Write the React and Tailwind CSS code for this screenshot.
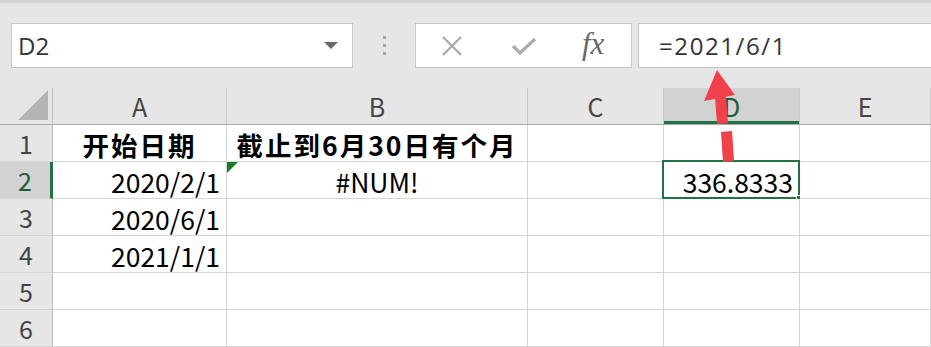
const cellFont = { fontFamily: '"Noto Sans CJK SC", "Liberation Sans", sans-serif' };

const cols = [
  { id: "A", w: "w-[174px]" },
  { id: "B", w: "w-[301px]" },
  { id: "C", w: "w-[136px]" },
  { id: "D", w: "w-[136px]" },
  { id: "E", w: "flex-1" },
];

const rows = [
  { n: 1, A: { t: "开始日期", bold: true, align: "center" }, B: { t: "截止到6月30日有个月", bold: true, align: "center" } },
  { n: 2, A: { t: "2020/2/1", align: "right" }, B: { t: "#NUM!", align: "center", flag: true }, D: { t: "336.8333", align: "right", selected: true } },
  { n: 3, A: { t: "2020/6/1", align: "right" } },
  { n: 4, A: { t: "2021/1/1", align: "right" } },
  { n: 5 },
  { n: 6 },
];

function Toolbar() {
  return (
    <div className="h-[88px] bg-[#e6e6e6] border-t-[3px] border-[#d4d4d4] flex items-start pt-[20px]">
      <div className="ml-[11px] w-[342px] h-[45px] bg-white border border-[#c6c6c6] flex items-center justify-between pl-[6px] pr-[14px]">
        <span className="text-[24px] text-[#333] leading-none" style={{ fontFamily: '"Open Sans", "Noto Sans", sans-serif' }}>D2</span>
        <svg width="14" height="8" viewBox="0 0 14 8"><path d="M0 0 L14 0 L7 7 Z" fill="#6b6b6b" /></svg>
      </div>
      <div className="w-[62px] h-[45px] flex flex-col items-center justify-center gap-[5px]">
        <span className="w-[3px] h-[3px] bg-[#a6a6a6]" />
        <span className="w-[3px] h-[3px] bg-[#a6a6a6]" />
        <span className="w-[3px] h-[3px] bg-[#a6a6a6]" />
      </div>
      <div className="w-[217px] h-[45px] bg-white border border-[#c6c6c6] flex items-center">
        <svg className="ml-[25px]" width="22" height="20" viewBox="0 0 22 20">
          <path d="M2 1 L20 19 M20 1 L2 19" stroke="#adadad" strokeWidth="2.4" />
        </svg>
        <svg className="ml-[48px]" width="26" height="20" viewBox="0 0 26 20">
          <path d="M2 10 L9 17 L24 3" stroke="#adadad" strokeWidth="3.4" fill="none" />
        </svg>
        <span className="ml-[45px] -mt-[4px] text-[31px] italic text-[#666] leading-none" style={{ fontFamily: '"Liberation Serif", serif' }}>fx</span>
      </div>
      <div className="ml-[6px] flex-1 h-[45px] bg-white border border-r-0 border-[#c6c6c6] flex items-center pl-[20px]">
        <span className="text-[24px] text-[#333] leading-none tracking-[1.6px]" style={{ fontFamily: '"Open Sans", "Noto Sans", sans-serif' }}>=2021/6/1</span>
      </div>
    </div>
  );
}

function HeaderRow() {
  return (
    <div className="flex h-[37px] bg-[#e6e6e6] border-b border-[#ababab]" style={cellFont}>
      <div className="w-[53px] shrink-0 border-r border-[#c0c0c0] relative">
        <svg className="absolute right-[4px] bottom-[4px]" width="30" height="30" viewBox="0 0 30 30">
          <path d="M30 0 L30 30 L0 30 Z" fill="#b4b4b4" />
        </svg>
      </div>
      {cols.map((c) => (
        <div
          key={c.id}
          className={`${c.w} shrink-0 border-r border-[#c8c8c8] flex items-center justify-center text-[25px] leading-none relative ${c.id === "D" ? "bg-[#d2d2d2] text-[#1e5c38]" : "text-[#444]"}`}
        >
          {c.id}
          {c.id === "D" && <span className="absolute left-0 right-0 bottom-0 h-[3px] bg-[#217346]" />}
        </div>
      ))}
    </div>
  );
}

function Row({ row }) {
  const sel = row.n === 2;
  return (
    <div className="flex h-[37px]" style={cellFont}>
      <div
        className={`w-[53px] shrink-0 border-b border-[#d4d4d4] flex items-center justify-center text-[25px] leading-none ${
          sel ? "bg-[#d2d2d2] text-[#1e5c38] border-r-[3px] border-r-[#217346]" : "bg-[#e6e6e6] text-[#444] border-r border-r-[#bcbcbc]"
        }`}
      >
        {row.n}
      </div>
      {cols.map((c) => {
        const cell = row[c.id];
        return (
          <div
            key={c.id}
            className={`${c.w} shrink-0 border-r border-b border-[#d4d4d4] bg-white flex items-center relative text-[26.5px] leading-none text-black ${
              cell?.align === "right" ? "justify-end pr-[6px]" : "justify-center"
            } ${cell?.bold ? "font-bold" : ""}`}
          >
            {cell?.flag && (
              <svg className="absolute left-0 top-0" width="11" height="11" viewBox="0 0 11 11">
                <path d="M0 0 L11 0 L0 11 Z" fill="#1d7a25" />
              </svg>
            )}
            {cell?.t && <span className={`pt-[4px] ${cell.bold ? "tracking-[2px]" : ""}`}>{cell.t}</span>}
            {cell?.selected && (
              <>
                <span className="absolute -left-[2px] -top-[2px] -right-[1px] -bottom-[1px] border-[2px] border-[#217346]" />
                <span className="absolute -right-[4px] -bottom-[4px] w-[7px] h-[7px] bg-[#217346] border border-white" />
              </>
            )}
          </div>
        );
      })}
    </div>
  );
}

export default function App() {
  return (
    <div className="w-[931px] h-[347px] overflow-hidden bg-white relative">
      <Toolbar />
      <HeaderRow />
      {rows.map((r) => (
        <Row key={r.n} row={r} />
      ))}
      {/* red arrow annotation */}
      <svg className="absolute left-0 top-0 pointer-events-none" width="931" height="347" viewBox="0 0 931 347">
        <path d="M717 70 L735 95 L704 101 Z" fill="#f0414a" />
        <path d="M715 97 L726 96 L728 123 L717 124 Z" fill="#f0414a" />
        <path d="M721 132 L732 131 L734 161 L723 162 Z" fill="#f0414a" />
      </svg>
    </div>
  );
}
